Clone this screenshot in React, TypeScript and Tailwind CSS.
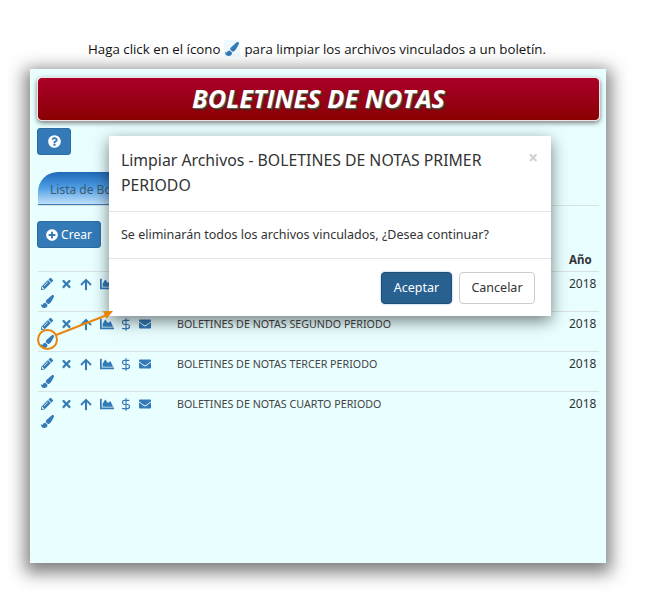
import { FaArrowUp, FaChartArea, FaEnvelope, FaPaintBrush, FaPencilAlt, FaPlusCircle, FaQuestionCircle, FaTimes } from "react-icons/fa";
import { DollarSign } from "lucide-react";

const rows = [
  "BOLETINES DE NOTAS PRIMER PERIODO",
  "BOLETINES DE NOTAS SEGUNDO PERIODO",
  "BOLETINES DE NOTAS TERCER PERIODO",
  "BOLETINES DE NOTAS CUARTO PERIODO",
];

function RowIcons() {
  return (
    <div className="w-[139px] shrink-0 text-[#337ab7]">
      <div className="flex h-[16px] items-center">
        <FaPencilAlt className="ml-[3px] h-[12px] w-[12px]" />
        <FaTimes className="ml-[8px] h-[12px] w-[11px]" />
        <FaArrowUp className="ml-[8px] h-[13px] w-[12px]" />
        <FaChartArea className="ml-[8px] h-[14px] w-[14px]" />
        <DollarSign className="ml-[5px] h-[17px] w-[14px]" strokeWidth={2} />
        <FaEnvelope className="ml-[5px] h-[12px] w-[14px]" />
      </div>
      <FaPaintBrush className="ml-[3px] mt-[3px] h-[13px] w-[13px]" />
    </div>
  );
}

export default function App() {
  return (
    <div className="h-[606px] w-[647px] overflow-hidden bg-white font-['Open_Sans',sans-serif]">
      <p className="flex h-[69px] items-start justify-center pr-[13px] pt-[40px] text-[13.3px] leading-[18px] text-[#111]">
        Haga click en el ícono
        <span className="mx-[4px] flex h-[17px] w-[16px] items-center justify-center bg-[#eefaff] text-[#337ab7]">
          <FaPaintBrush className="h-[14px] w-[14px]" />
        </span>
        para limpiar los archivos vinculados a un boletín.
      </p>

      <div className="relative ml-[30px] h-[494px] w-[576px] bg-[#e8feff] px-[7px] pt-[8px] font-['Noto_Sans',sans-serif] shadow-[0_5px_16px_5px_rgba(0,0,0,0.5)]">
        <header className="flex h-[44px] w-[563px] items-center justify-center rounded-[5px] border border-[#f3e4e4] bg-gradient-to-b from-[#aa0028] to-[#8a0000] shadow-[0_2px_5px_rgba(0,0,0,0.5)]">
          <h1 className="font-['Open_Sans',sans-serif] text-[25.3px] font-bold italic text-white [text-shadow:1px_1px_0_#6b5a4c,2px_2px_1px_#3b2a1c]">
            BOLETINES DE NOTAS
          </h1>
        </header>

        <button className="mt-[7px] flex h-[27px] w-[34px] items-center justify-center rounded-[3px] border border-[#2e6da4] bg-[#337ab7] text-white">
          <FaQuestionCircle className="h-[13px] w-[13px]" />
        </button>

        <div className="mt-[17px] h-[34px] border-b border-[#d9e2e2]">
          <div className="ml-[1px] h-[33px] w-[120px] rounded-tl-[20px] rounded-tr-[4px] border-b border-[#3f7fb8] bg-gradient-to-b from-[#1f69b8] via-[#4f9fe6] to-[#bfe0f7] pl-[12px] pt-[9px] text-[12px] text-[#3e5a70]">
            Lista de Boletines
          </div>
        </div>

        <button className="mt-[15px] flex h-[27px] w-[64px] items-center justify-center gap-[3px] rounded-[3px] border border-[#2e6da4] bg-[#337ab7] text-[12px] text-white">
          <FaPlusCircle className="h-[12px] w-[12px]" />
          Crear
        </button>

        <div className="ml-[1px] mt-[1px] w-[561px] text-[11px] text-[#333]">
          <div className="flex h-[23px] items-end justify-end border-b border-[#d9e2e2] pb-[3px] pr-[7px]">
            <span className="w-[23px] text-[11.5px] font-bold">Año</span>
          </div>
          {rows.map((title) => (
            <div key={title} className="flex h-[40px] border-b border-[#d9e2e2] pt-[4px] last:border-b-0">
              <RowIcons />
              <span className="mt-[1px] w-[392px] shrink-0 text-[10.7px] leading-[14px] text-[#444]">{title}</span>
              <span className="mt-[1px] text-[12px] leading-[14px]">2018</span>
            </div>
          ))}
        </div>

        {/* el modal va sobre la tabla */}
        <div className="absolute left-[79px] top-[67px] h-[180px] w-[442px] bg-white text-[#333] shadow-[0_5px_15px_rgba(0,0,0,0.5)]">
          <div className="relative h-[76px] border-b border-[#e5e5e5] px-[12px] pt-[12px]">
            <h2 className="w-[385px] text-[15.8px] leading-[24.5px]">
              Limpiar Archivos - BOLETINES DE NOTAS PRIMER PERIODO
            </h2>
            <span className="absolute right-[13px] top-[12px] text-[17px] font-bold leading-[20px] text-[#d0d0d0]">×</span>
          </div>
          <div className="flex h-[47px] items-center border-b border-[#e5e5e5] px-[12px] text-[12.5px]">
            Se eliminarán todos los archivos vinculados, ¿Desea continuar?
          </div>
          <div className="flex justify-end gap-[7px] pr-[16px] pt-[13px] text-[12.5px]">
            <button className="h-[32px] w-[71px] rounded-[4px] border border-[#204d74] bg-[#286090] text-white shadow-[0_0_2px_#7fb2e5]">
              Aceptar
            </button>
            <button className="h-[32px] w-[76px] rounded-[4px] border border-[#ccc] bg-white">
              Cancelar
            </button>
          </div>
        </div>

        {/* anotación naranja sobre el ícono */}
        <svg className="absolute left-0 top-0 h-[494px] w-[576px]" viewBox="0 0 576 494" fill="none">
          <circle cx="17.5" cy="270.5" r="9.5" stroke="#e8850c" strokeWidth="2" />
          <path d="M26 266 L77 246" stroke="#e8850c" strokeWidth="2" />
          <path d="M83 242 L73 242 L76.5 250 Z" fill="#e8850c" />
        </svg>
      </div>
    </div>
  );
}
